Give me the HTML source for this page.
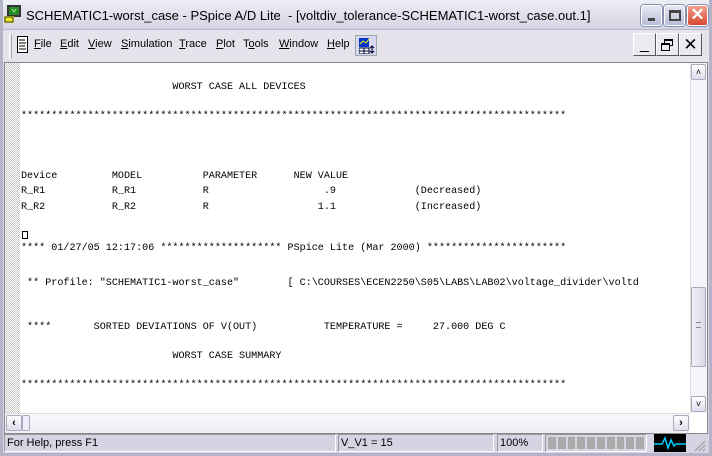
<!DOCTYPE html>
<html><head><meta charset="utf-8"><style>
*{margin:0;padding:0;box-sizing:border-box}
body{width:712px;height:456px;overflow:hidden;background:#d6d3e2;font-family:"Liberation Sans",sans-serif;position:relative}
.abs{position:absolute}
.t{position:absolute;left:21px;font-family:"Liberation Mono",monospace;font-size:10.1px;white-space:pre;color:#000;line-height:12px}
.cb{position:absolute;top:5px;width:21px;height:21px;border-radius:3px;border:1px solid #fff;background:linear-gradient(#e8e8f4,#b8bcd8);box-shadow:0 0 0 1px #8890b0}
.mb{position:absolute;top:33px;width:23px;height:23px;background:#ece9f0;border:1px solid;border-color:#fff #555 #555 #fff;font-size:16px;text-align:center;line-height:21px}
.m{position:absolute;top:38px;font-size:11px;color:#000}
u{text-decoration:underline}
.sb{position:absolute;top:434px;height:18px;border:1px solid;border-color:#999 #fff #fff #999;font-size:11px;line-height:16px;padding-left:2px}
</style></head><body>
<div class="abs" style="left:0;top:0;width:712px;height:30px;background:linear-gradient(#eeeef6,#d4d4e4);border-bottom:1px solid #b8b8cc"></div>
<svg class="abs" style="left:4px;top:5px" width="18" height="18"><rect x="3" y="0" width="14" height="12" fill="#333"/><rect x="5" y="2" width="10" height="8" fill="#2a8a2a"/><path d="M8 4l2 3 2-3" stroke="#8f8" fill="none"/><rect x="0" y="11" width="10" height="7" fill="#ee2"/><rect x="1" y="12" width="8" height="5" fill="none" stroke="#333"/></svg>
<div class="abs" style="left:26px;top:8px;font-size:13px;color:#000;white-space:pre">SCHEMATIC1-worst_case - PSpice A/D Lite  - [voltdiv_tolerance-SCHEMATIC1-worst_case.out.1]</div>
<div class="cb" style="left:641px"><div class="abs" style="left:6px;top:12px;width:7px;height:3px;background:#444"></div></div>
<div class="cb" style="left:664px"><div class="abs" style="left:4px;top:4px;width:12px;height:11px;border:2px solid #444;border-top-width:3px"></div></div>
<div class="cb" style="left:687px;background:linear-gradient(#f0a090,#d84830)"><div class="abs" style="left:0;top:-1px;width:19px;text-align:center;color:#fff;font-size:17px;font-weight:bold">✕</div></div>
<div class="abs" style="left:0;top:30px;width:712px;height:32px;background:#e6e3ec"></div>
<div class="abs" style="left:9px;top:34px;width:3px;height:24px;border-left:1px solid #fff;border-right:1px solid #aaa"></div>
<svg class="abs" style="left:17px;top:36px" width="12" height="20"><rect x="0.5" y="0.5" width="10" height="16" fill="#fff" stroke="#000"/><path d="M2 4h6M2 7h7M2 10h6M2 13h7" stroke="#000"/></svg>
<div class="m" style="left:34px"><u>F</u>ile</div>
<div class="m" style="left:60px"><u>E</u>dit</div>
<div class="m" style="left:88px"><u>V</u>iew</div>
<div class="m" style="left:121px"><u>S</u>imulation</div>
<div class="m" style="left:179px"><u>T</u>race</div>
<div class="m" style="left:216px"><u>P</u>lot</div>
<div class="m" style="left:243px">T<u>o</u>ols</div>
<div class="m" style="left:279px"><u>W</u>indow</div>
<div class="m" style="left:327px"><u>H</u>elp</div>
<div class="abs" style="left:355px;top:35px;width:22px;height:21px;background:#d8d8f0;border:1px solid #9aa"></div>
<svg class="abs" style="left:359px;top:38px" width="16" height="16"><rect x="0" y="0" width="10" height="9" fill="#0033cc"/><path d="M1 6l3-3 3 2 3-4" stroke="#ff0" fill="none"/><rect x="0" y="10" width="10" height="6" fill="#fff" stroke="#003"/><path d="M0 13h10M5 10v6" stroke="#003"/><path d="M13 8v7M11 10l2-2 2 2M11 13l2 2 2-2" stroke="#003" fill="none"/></svg>
<div class="mb" style="left:633px">_</div>
<div class="mb" style="left:656px"><div class="abs" style="left:7px;top:5px;width:9px;height:7px;border:1px solid #000;border-top-width:2px"></div><div class="abs" style="left:4px;top:9px;width:9px;height:8px;border:1px solid #000;border-top-width:2px;background:#ece9f0"></div></div>
<div class="mb" style="left:679px;font-size:17px">✕</div>
<div class="abs" style="left:4px;top:62px;width:704px;height:372px;background:#fff;border:1px solid #888"></div>
<div class="abs" style="left:5px;top:63px;width:15px;height:350px;background:repeating-conic-gradient(#c8c8c8 0 25%,#fff 0 50%) 0 0/2px 2px"></div>
<div class="t" style="top:82px">                         WORST CASE ALL DEVICES</div>
<div class="t" style="top:111px">******************************************************************************************</div>
<div class="t" style="top:171px">Device         MODEL          PARAMETER      NEW VALUE</div>
<div class="t" style="top:186px">R_R1           R_R1           R                   .9             (Decreased)</div>
<div class="t" style="top:202px">R_R2           R_R2           R                  1.1             (Increased)</div>
<div class="abs" style="left:22px;top:231px;width:6px;height:8px;border:1px solid #000"></div>
<div class="t" style="top:243px">**** 01/27/05 12:17:06 ******************** PSpice Lite (Mar 2000) ***********************</div>
<div class="t" style="top:278px"> ** Profile: "SCHEMATIC1-worst_case"        [ C:\COURSES\ECEN2250\S05\LABS\LAB02\voltage_divider\voltd</div>
<div class="t" style="top:322px"> ****       SORTED DEVIATIONS OF V(OUT)           TEMPERATURE =     27.000 DEG C</div>
<div class="t" style="top:351px">                         WORST CASE SUMMARY</div>
<div class="t" style="top:380px">******************************************************************************************</div>
<div class="abs" style="left:690px;top:63px;width:17px;height:350px;background:#f4f4fa;border-left:1px solid #ddd"></div>
<div class="abs" style="left:691px;top:64px;width:15px;height:16px;border:1px solid #aab;border-radius:2px;background:linear-gradient(#fff,#dde);font-size:9px;text-align:center;line-height:14px">&#x2c4;</div>
<div class="abs" style="left:691px;top:287px;width:15px;height:80px;border:1px solid #aab;border-radius:2px;background:linear-gradient(90deg,#f0f0f8,#d8d8e8)"><div class="abs" style="left:4px;top:34px;width:5px;height:6px;border-top:1px solid #888;border-bottom:1px solid #888"></div></div>
<div class="abs" style="left:691px;top:396px;width:15px;height:16px;border:1px solid #aab;border-radius:2px;background:linear-gradient(#fff,#dde);font-size:9px;text-align:center;line-height:14px">&#x2c5;</div>
<div class="abs" style="left:5px;top:413px;width:685px;height:20px;background:linear-gradient(#f8f8fc,#eeeef6);border-top:1px solid #ddd"></div>
<div class="abs" style="left:6px;top:415px;width:16px;height:16px;border:1px solid #aab;border-radius:2px;background:linear-gradient(#fff,#dde);font-size:11px;text-align:center;line-height:14px;font-weight:bold">‹</div>
<div class="abs" style="left:22px;top:415px;width:8px;height:16px;border:1px solid #aab;border-radius:2px;background:#eef"></div>
<div class="abs" style="left:673px;top:415px;width:16px;height:16px;border:1px solid #aab;border-radius:2px;background:linear-gradient(#fff,#dde);font-size:11px;text-align:center;line-height:14px;font-weight:bold">›</div>
<div class="sb" style="left:4px;width:332px">For Help, press F1</div>
<div class="sb" style="left:338px;width:156px">V_V1 =  15</div>
<div class="sb" style="left:497px;width:46px">100%</div>
<div class="sb" style="left:545px;width:102px;padding:2px;display:flex;gap:2px">
<i style="flex:1;background:#aaa"></i><i style="flex:1;background:#aaa"></i><i style="flex:1;background:#aaa"></i><i style="flex:1;background:#aaa"></i><i style="flex:1;background:#aaa"></i><i style="flex:1;background:#aaa"></i><i style="flex:1;background:#aaa"></i><i style="flex:1;background:#aaa"></i><i style="flex:1;background:#aaa"></i><i style="flex:1;background:#aaa"></i></div>
<svg class="abs" style="left:654px;top:434px" width="32" height="18"><rect width="32" height="18" fill="#000"/><path d="M0 10h8l3-6 3 10 3-8 3 6 2-2h10" stroke="#0cf" stroke-width="1.5" fill="none"/></svg>
<svg class="abs" style="left:694px;top:440px" width="12" height="12"><path d="M11 1L1 11M11 5L5 11M11 9L9 11" stroke="#999"/></svg>
<div class="abs" style="left:0;top:0;width:712px;height:456px;border:3px solid #b4b4c8;border-top:none;pointer-events:none"></div>
</body></html>
